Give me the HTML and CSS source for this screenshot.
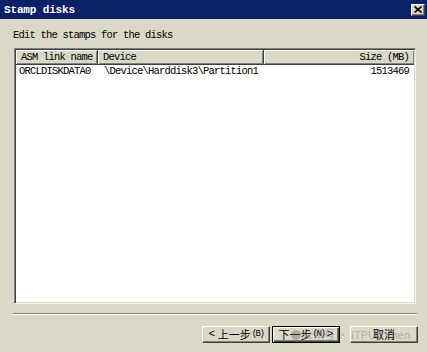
FILE: index.html
```html
<!DOCTYPE html>
<html>
<head>
<meta charset="utf-8">
<link rel="stylesheet" href="styles.css">
</head>
<body>
<div class="window">
  <div class="titlebar">
    <span class="title">Stamp disks</span>
    <span class="close"><svg width="8" height="7" viewBox="0 0 8 7"><path d="M0.5 0.5 L7.5 6.5 M7.5 0.5 L0.5 6.5" stroke="#000" stroke-width="1.7"/></svg></span>
  </div>
  <div class="desc">Edit the stamps for the disks</div>
  <div class="list">
    <div class="head">
      <div class="hc c1">ASM link name</div>
      <div class="hc c2">Device</div>
      <div class="hc c3">Size (MB)</div>
    </div>
    <div class="row">
      <div class="rc c1 r1">ORCLDISKDATA0</div>
      <div class="rc c2 r2">\Device\Harddisk3\Partition1</div>
      <div class="rc c3 r3">1513469</div>
    </div>
  </div>
  <div class="sep"></div>
  <div class="buttons">
    <div class="btn"><span class="lt">&lt;</span>&nbsp;上一步<span class="acc">(B)</span></div>
    <div class="btn focus">下一步<span class="acc">(N)</span>&nbsp;<span class="lt">&gt;</span></div>
    <div class="btn cancel">取消</div>
  </div>
  <div class="watermark"><span class="wm-dot"></span>公众号 · ITPUB chen</div>
</div>
</body>
</html>
```
FILE: styles.css
```css
html, body {
  margin: 0;
  padding: 0;
}
body {
  width: 427px;
  height: 352px;
  overflow: hidden;
  background: #dad9c7;
}
.window {
  position: relative;
  width: 427px;
  height: 352px;
  display: flex;
  flex-direction: column;
  background: #dad9c7;
  font-family: "Liberation Mono", "Noto Sans CJK SC", monospace;
  color: #000;
}
.titlebar {
  height: 19px;
  background: #0a2167;
  display: flex;
  align-items: center;
  justify-content: space-between;
  padding: 0 2px 0 4px;
}
.title {
  color: #fff;
  font-weight: bold;
  font-size: 11px;
  letter-spacing: -0.15px;
}
.close {
  width: 14px;
  height: 12px;
  box-sizing: border-box;
  background: #dad9c7;
  border: 1px solid;
  border-color: #fff #404040 #404040 #fff;
  box-shadow: inset -1px -1px #808080;
  display: flex;
  align-items: center;
  justify-content: center;
}
.desc {
  margin-top: 10px;
  padding-left: 13px;
  font-size: 10.5px;
  letter-spacing: -0.8px;
  line-height: 12px;
}
.list {
  margin-top: 7px;
  margin-left: 14px;
  width: 402px;
  height: 256px;
  box-sizing: border-box;
  background: #fff;
  border: 1px solid;
  border-color: #808080 #f4f4ee #f4f4ee #808080;
  box-shadow: inset 1px 1px #404040, inset -1px -1px #d8d7c8;
  padding: 1px;
  font-size: 10.5px;
  letter-spacing: -0.8px;
}
.head {
  display: flex;
  height: 15px;
}
.hc {
  box-sizing: border-box;
  height: 15px;
  line-height: 14px;
  background: #dad9c7;
  border-right: 1px solid #404040;
  border-bottom: 1px solid #404040;
  box-shadow: inset 1px 1px #fff, inset -1px -1px #808080;
  white-space: nowrap;
}
.c1 { width: 82px; padding-left: 5px; }
.c2 { width: 166px; padding-left: 5px; }
.c3 { flex: 1; text-align: right; padding-right: 5px; }
.hc.c3 { border-right: none; }
.row {
  display: flex;
  height: 13px;
  line-height: 13px;
}
.rc { box-sizing: border-box; white-space: nowrap; }
.r1 { padding-left: 3px; }
.r2 { padding-left: 6px; }
.r3 { padding-right: 5px; }
.sep {
  margin-top: 9px;
  margin-left: 13px;
  width: 404px;
  height: 2px;
  box-sizing: border-box;
  border-top: 1px solid #808080;
  border-bottom: 1px solid #fff;
}
.buttons {
  margin-top: 11px;
  display: flex;
  justify-content: flex-end;
  padding-right: 9px;
}
.btn {
  width: 68px;
  height: 17px;
  box-sizing: border-box;
  border: 1px solid;
  border-color: #fff #404040 #404040 #fff;
  box-shadow: inset -1px -1px #808080;
  display: flex;
  align-items: center;
  justify-content: center;
  font-family: "Noto Sans CJK SC", "Liberation Mono", sans-serif;
  font-size: 11px;
  line-height: 13px;
  margin-left: 2px;
}
.btn .lt {
  font-family: "Liberation Mono", monospace;
  font-size: 11px;
}
.btn .acc {
  font-family: "Liberation Mono", monospace;
  font-size: 9px;
  letter-spacing: -1.5px;
  margin-left: 1px;
}
.btn.focus {
  border: 1px solid #000;
  box-shadow: inset 1px 1px #fff, inset -1px -1px #404040, inset -2px -2px #808080;
}
.btn.cancel {
  margin-left: 10px;
}
.watermark {
  position: absolute;
  left: 291px;
  top: 327px;
  display: flex;
  align-items: center;
  font-family: "Noto Sans CJK SC", sans-serif;
  font-size: 11px;
  line-height: 15px;
  color: rgba(120, 120, 120, 0.45);
  pointer-events: none;
  white-space: nowrap;
}
.wm-dot {
  width: 10px;
  height: 10px;
  border-radius: 50%;
  background: rgba(110, 110, 110, 0.45);
  margin-right: 1px;
}
```
